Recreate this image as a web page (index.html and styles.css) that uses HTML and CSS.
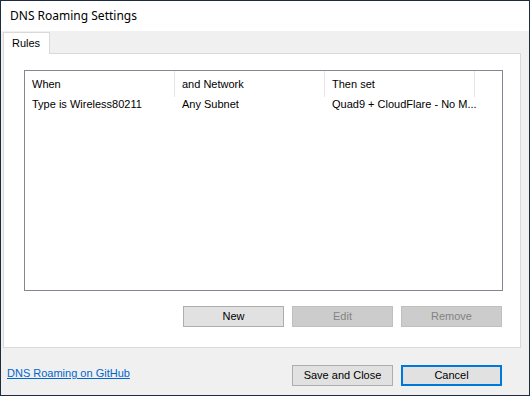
FILE: index.html
```html
<!DOCTYPE html>
<html>
<head>
<meta charset="utf-8">
<link rel="stylesheet" href="styles.css">
</head>
<body>
<div class="window">
  <div class="titlebar">DNS Roaming Settings</div>
  <div class="tabs">
    <div class="tab">Rules</div>
  </div>
  <div class="panel">
    <div class="listview">
      <div class="lv-row lv-header">
        <div class="col c1">When</div>
        <div class="col c2">and Network</div>
        <div class="col c3">Then set</div>
      </div>
      <div class="lv-row lv-item">
        <div class="col c1">Type is Wireless80211</div>
        <div class="col c2">Any Subnet</div>
        <div class="col c3">Quad9 + CloudFlare - No M...</div>
      </div>
    </div>
    <div class="btnrow">
      <button class="btn">New</button>
      <button class="btn disabled">Edit</button>
      <button class="btn disabled">Remove</button>
    </div>
  </div>
  <div class="footer">
    <a class="link" href="#">DNS Roaming on GitHub</a>
    <div class="footer-btns">
      <button class="btn">Save and Close</button>
      <button class="btn default">Cancel</button>
    </div>
  </div>
</div>
</body>
</html>
```
FILE: styles.css
```css
html, body {
  margin: 0;
  padding: 0;
  background: #f0f0f0;
}
body {
  font-family: "Liberation Sans", Arial, sans-serif;
  font-size: 11px;
  color: #000;
}
.window {
  box-sizing: border-box;
  width: 530px;
  height: 396px;
  border: 1px solid #1d2c3e;
  background: #f0f0f0;
  display: flex;
  flex-direction: column;
}
.titlebar {
  height: 30px;
  background: #fff;
  padding-left: 9px;
  line-height: 30px;
  font-family: "Noto Sans", "Liberation Sans", sans-serif;
  font-size: 12px;
}
.tabs {
  display: flex;
  padding-left: 2px;
  margin-top: 1px;
}
.tab {
  box-sizing: border-box;
  width: 47px;
  height: 22px;
  border: 1px solid #d9d9d9;
  border-bottom: none;
  background: #fff;
  padding-left: 8px;
  line-height: 21px;
  margin-bottom: -1px;
  position: relative;
}
.panel {
  box-sizing: border-box;
  width: 518px;
  height: 295px;
  margin-left: 2px;
  border: 1px solid #d9d9d9;
  background: #fff;
  padding: 16px 17px 0 20px;
}
.listview {
  box-sizing: border-box;
  width: 479px;
  height: 221px;
  border: 1px solid #828790;
  background: #fff;
}
.lv-row {
  display: flex;
}
.lv-header {
  height: 26px;
  line-height: 26px;
}
.lv-header .col {
  border-right: 1px solid #e5e5e5;
}
.lv-item {
  height: 15px;
  line-height: 15px;
}
.col {
  box-sizing: border-box;
  padding-left: 7px;
  white-space: nowrap;
}
.c1 { width: 150px; }
.c2 { width: 150px; }
.c3 { width: 150px; }
.btnrow {
  display: flex;
  justify-content: flex-end;
  gap: 8px;
  margin-top: 15px;
  width: 478px;
}
.btn {
  box-sizing: border-box;
  width: 101px;
  height: 21px;
  border: 1px solid #adadad;
  background: #e1e1e1;
  font-family: inherit;
  font-size: 11px;
  color: #000;
  padding: 0;
  margin: 0;
  line-height: 19px;
}
.btn.disabled {
  background: #cccccc;
  border-color: #bfbfbf;
  color: #838383;
}
.btn.default {
  border: 2px solid #0078d7;
  line-height: 17px;
}
.footer {
  display: flex;
  align-items: flex-start;
  justify-content: space-between;
  padding: 17px 27px 0 6px;
}
.link {
  color: #0066cc;
  text-decoration: underline;
  line-height: 16px;
}
.footer-btns {
  display: flex;
  gap: 8px;
}
```
